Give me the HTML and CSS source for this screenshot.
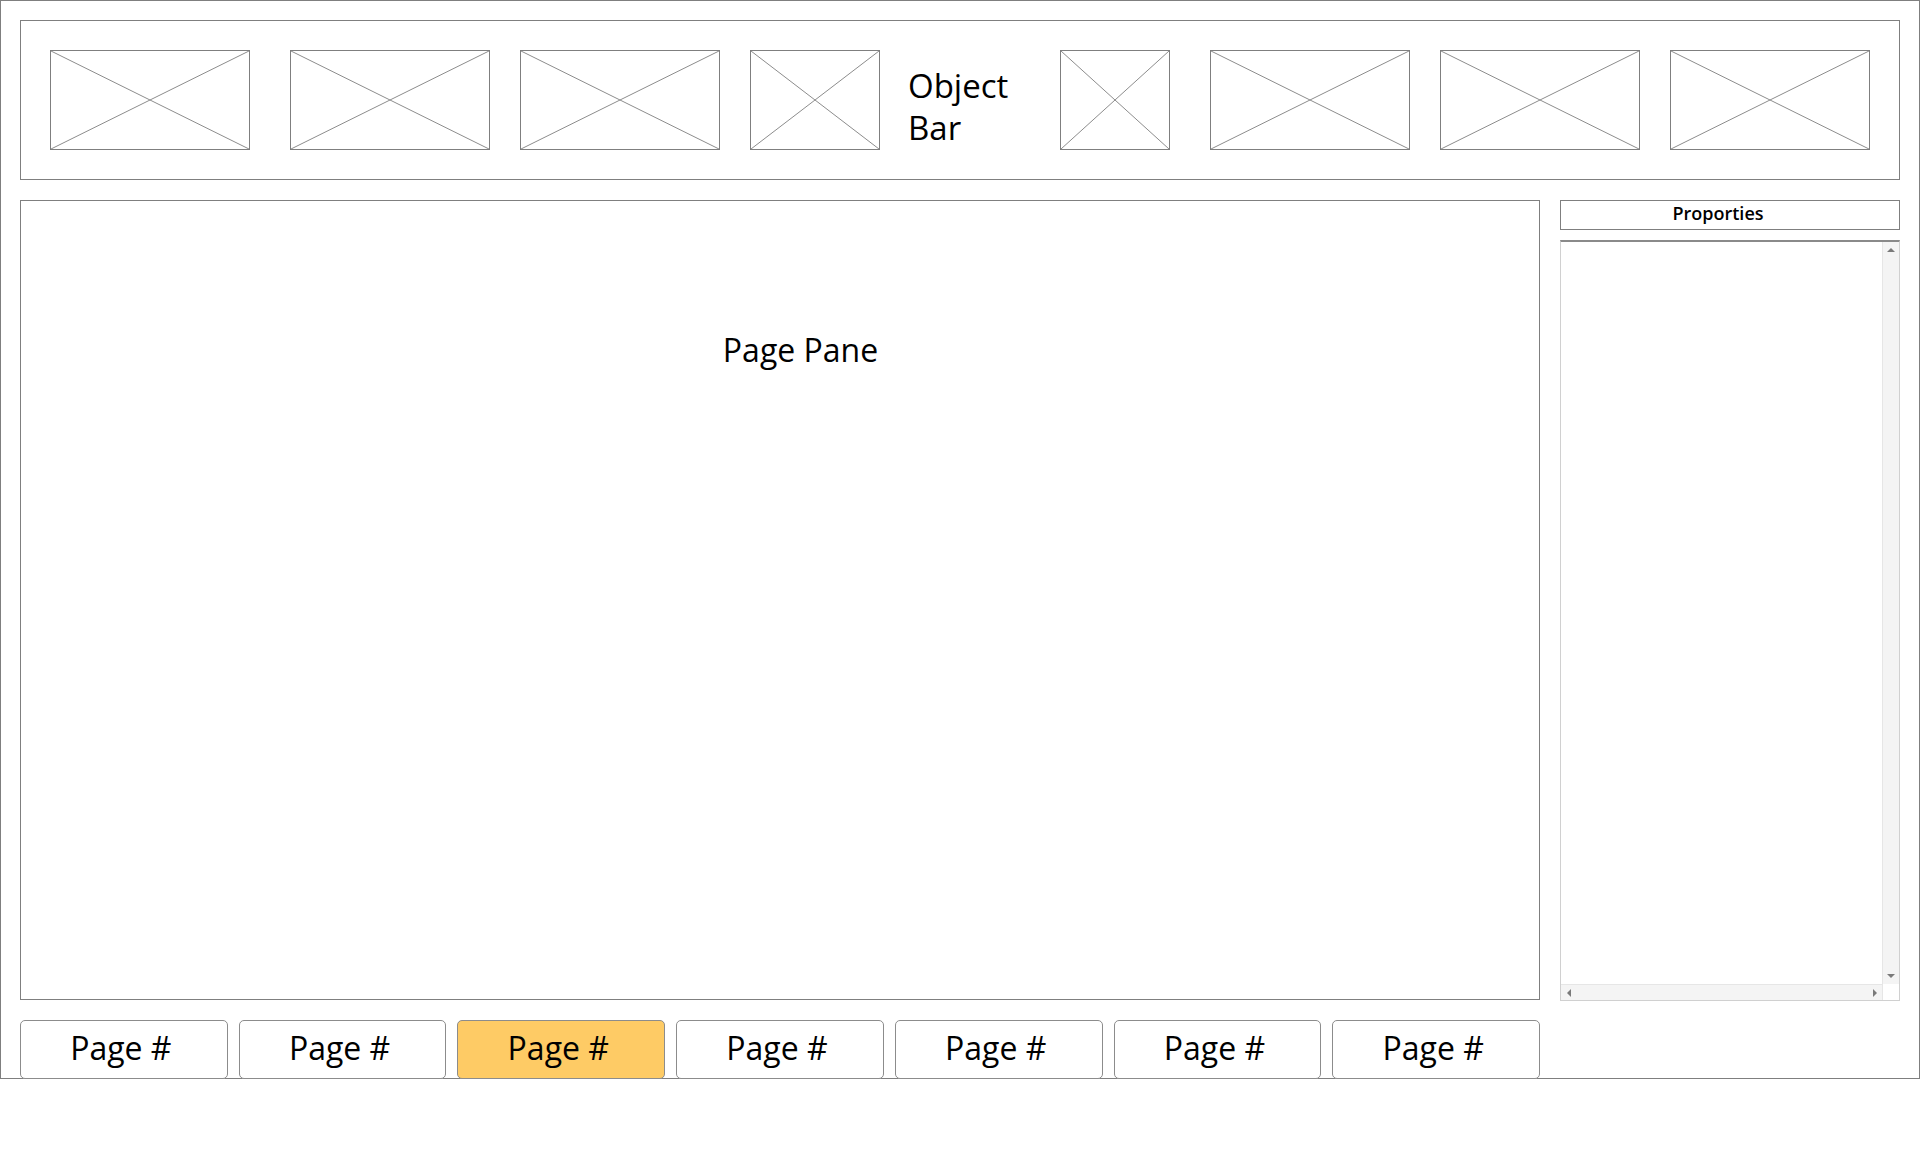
FILE: index.html
```html
<!DOCTYPE html>
<html lang="en">
<head>
<meta charset="utf-8">
<title>Wireframe</title>
<link rel="stylesheet" href="styles.css">
</head>
<body>
<div class="frame">
  <div class="objbar">
    <div class="ph w200 extra"><svg viewBox="0 0 100 100" preserveAspectRatio="none"><path d="M0 0L100 100M100 0L0 100"/></svg></div>
    <div class="ph w200"><svg viewBox="0 0 100 100" preserveAspectRatio="none"><path d="M0 0L100 100M100 0L0 100"/></svg></div>
    <div class="ph w200"><svg viewBox="0 0 100 100" preserveAspectRatio="none"><path d="M0 0L100 100M100 0L0 100"/></svg></div>
    <div class="ph w130"><svg viewBox="0 0 100 100" preserveAspectRatio="none"><path d="M0 0L100 100M100 0L0 100"/></svg></div>
    <div class="objtext">Object<br>Bar</div>
    <div class="ph w110 extra"><svg viewBox="0 0 100 100" preserveAspectRatio="none"><path d="M0 0L100 100M100 0L0 100"/></svg></div>
    <div class="ph w200"><svg viewBox="0 0 100 100" preserveAspectRatio="none"><path d="M0 0L100 100M100 0L0 100"/></svg></div>
    <div class="ph w200"><svg viewBox="0 0 100 100" preserveAspectRatio="none"><path d="M0 0L100 100M100 0L0 100"/></svg></div>
    <div class="ph w200"><svg viewBox="0 0 100 100" preserveAspectRatio="none"><path d="M0 0L100 100M100 0L0 100"/></svg></div>
  </div>
  <div class="main">
    <div class="left">
      <div class="pane"><div class="pane-title">Page Pane</div></div>
      <div class="tabs">
        <div class="tab">Page #</div>
        <div class="tab">Page #</div>
        <div class="tab active">Page #</div>
        <div class="tab">Page #</div>
        <div class="tab">Page #</div>
        <div class="tab">Page #</div>
        <div class="tab">Page #</div>
      </div>
    </div>
    <div class="right">
      <div class="prop-head">Proporties</div>
      <div class="listbox">
        <div class="lb-body"></div>
        <div class="vscroll"><span class="arr up"></span><span class="arr down"></span></div>
        <div class="hscroll"><span class="arr lft"></span><span class="arr rgt"></span></div>
        <div class="corner"></div>
      </div>
    </div>
  </div>
</div>
</body>
</html>
```
FILE: styles.css
```css
html, body {
  margin: 0;
  padding: 0;
  background: #ffffff;
}
body {
  font-family: "Open Sans", "Noto Sans", sans-serif;
  color: #000;
}
.frame {
  box-sizing: border-box;
  width: 1920px;
  height: 1079px;
  border: 1px solid #7f7f7f;
  padding: 19px 19px 0 19px;
  display: flex;
  flex-direction: column;
  gap: 20px;
}
.objbar {
  box-sizing: border-box;
  height: 160px;
  border: 1px solid #7f7f7f;
  padding: 29px 29px;
  display: flex;
  gap: 30px;
}
.ph {
  box-sizing: border-box;
  height: 100px;
  border: 1px solid #7f7f7f;
  flex: none;
}
.ph svg {
  display: block;
  width: 100%;
  height: 100%;
}
.ph path {
  stroke: #8c8c8c;
  stroke-width: 1;
  fill: none;
  vector-effect: non-scaling-stroke;
}
.w200 { width: 200px; }
.w130 { width: 130px; }
.w110 { width: 110px; }
.extra { margin-right: 10px; }
.objtext {
  width: 120px;
  flex: none;
  font-size: 33px;
  line-height: 42px;
  padding-top: 15px;
  margin-left: -2px;
  margin-right: 2px;
}
.main {
  flex: 1;
  display: flex;
  gap: 20px;
  min-height: 0;
}
.left {
  width: 1520px;
  display: flex;
  flex-direction: column;
  gap: 20px;
}
.pane {
  box-sizing: border-box;
  height: 800px;
  border: 1px solid #7f7f7f;
  padding-top: 127px;
}
.pane-title {
  font-size: 32px;
  line-height: 44px;
  text-align: center;
  padding-left: 41px;
}
.tabs {
  display: flex;
  gap: 11px;
  height: 59px;
  margin-bottom: -1px;
}
.tab {
  flex: 1;
  box-sizing: border-box;
  border: 1px solid #8c8c8c;
  border-radius: 5px;
  background: #ffffff;
  font-size: 32px;
  font-weight: 500;
  line-height: 44px;
  display: flex;
  align-items: center;
  justify-content: center;
  padding-bottom: 4px;
  padding-right: 6px;
}
.tab.active {
  background: #fecb65;
}
.right {
  width: 340px;
  display: flex;
  flex-direction: column;
  gap: 10px;
}
.prop-head {
  box-sizing: border-box;
  height: 30px;
  border: 1px solid #7f7f7f;
  font-size: 18px;
  font-weight: 600;
  line-height: 25px;
  text-align: center;
  padding-right: 24px;
}
.listbox {
  box-sizing: border-box;
  height: 761px;
  border: 1px solid #d0d0d0;
  border-top: 2px solid #8a8a8a;
  display: grid;
  grid-template-columns: 1fr 17px;
  grid-template-rows: 1fr 16px;
}
.lb-body {
  background: #ffffff;
}
.vscroll {
  background: #f4f4f4;
  border-left: 1px solid #e6e6e6;
  position: relative;
}
.hscroll {
  background: #f4f4f4;
  border-top: 1px solid #e6e6e6;
  position: relative;
}
.corner {
  background: #ffffff;
  border-left: 1px solid #e6e6e6;
}
.arr {
  position: absolute;
  width: 0;
  height: 0;
}
.arr.up {
  top: 6px;
  left: 4px;
  border-left: 4px solid transparent;
  border-right: 4px solid transparent;
  border-bottom: 4px solid #7a7a7a;
}
.arr.down {
  bottom: 6px;
  left: 4px;
  border-left: 4px solid transparent;
  border-right: 4px solid transparent;
  border-top: 4px solid #7a7a7a;
}
.arr.lft {
  left: 6px;
  top: 4px;
  border-top: 4px solid transparent;
  border-bottom: 4px solid transparent;
  border-right: 4px solid #7a7a7a;
}
.arr.rgt {
  right: 5px;
  top: 4px;
  border-top: 4px solid transparent;
  border-bottom: 4px solid transparent;
  border-left: 4px solid #7a7a7a;
}
```
